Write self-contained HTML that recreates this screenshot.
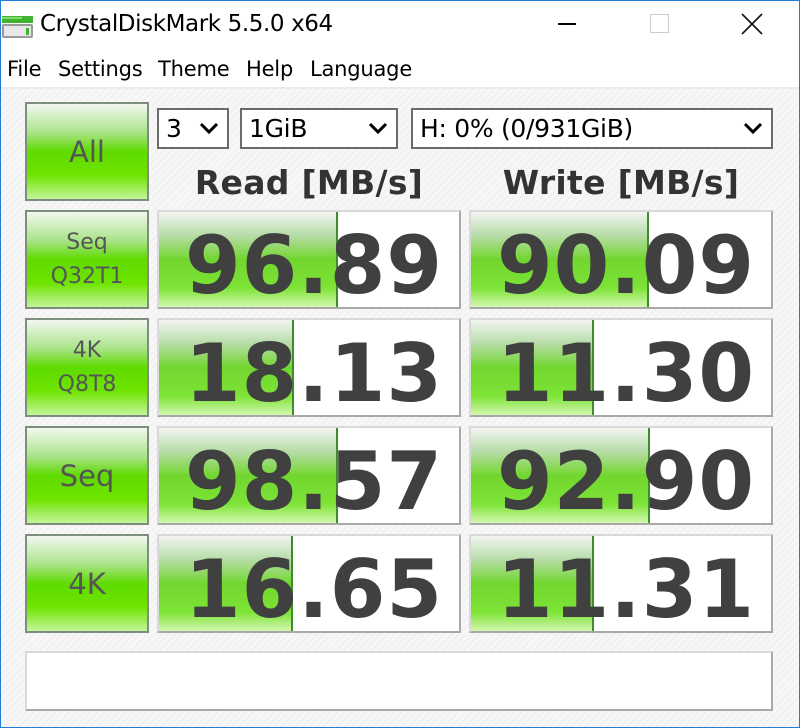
<!DOCTYPE html>
<html><head><meta charset="utf-8"><style>
*{margin:0;padding:0;box-sizing:border-box}
body{width:800px;height:728px;overflow:hidden;background:#fff;font-family:"Liberation Sans","DejaVu Sans",sans-serif;position:relative}
.win{position:absolute;left:0;top:0;width:800px;height:728px;border:1px solid #1f80d8}
.abs{position:absolute}
.title{left:40px;top:11px;font-size:23px;color:#000;font-family:"DejaVu Sans",sans-serif;letter-spacing:-0.4px}
.menu{top:57px;font-size:21px;color:#000;font-family:"DejaVu Sans",sans-serif;letter-spacing:-0.2px}
.body{left:1px;top:87px;width:798px;height:640px;background:repeating-linear-gradient(135deg,#f7f7f7 0 3px,#f1f1f1 3px 5px);border-top:2px solid #ececec}
.btn{left:25px;width:124px;height:99px;border:2px solid #7d8e7d;background:linear-gradient(#f2f8f0 0%,#a9e388 30%,#5fdb00 50%,#6ee400 75%,#c4f59c 100%);color:#555;font-family:"Comic Sans MS","DejaVu Sans",sans-serif;font-size:22px;text-align:center;display:flex;align-items:center;justify-content:center;line-height:34px}
.cell{height:99px;width:304px;border:2px solid;border-color:#d9d9d9 #a8a8a8 #a8a8a8 #d9d9d9;background:#fff;overflow:hidden}
.bar{position:absolute;left:0;top:0;bottom:0;background:linear-gradient(#f3f5f3 0%,#b6dca6 25%,#72d62f 50%,#7de336 80%,#d3f7b0 100%);border-right:2px solid #3f8c2f}
.num{position:absolute;left:10px;right:0;top:9px;text-align:center;font-family:"DejaVu Sans",sans-serif;font-weight:bold;font-size:80px;color:#404040;letter-spacing:1px;line-height:90px}
.combo{top:108px;height:41px;border:2px solid #6b6b6b;background:#fff;font-family:"DejaVu Sans",sans-serif;font-size:25px;line-height:37px;padding-left:7px;color:#000;letter-spacing:-0.3px}
.chev{position:absolute;right:8px;top:8px}
.hdr{top:163px;font-family:"DejaVu Sans",sans-serif;font-weight:bold;font-size:33px;color:#333;text-align:center;width:304px;letter-spacing:0.3px}
</style></head><body>
<div class="win"></div>
<svg class="abs" style="left:2px;top:16px" width="32" height="24"><rect x="0" y="0" width="31" height="7" fill="#3fb52e"/><rect x="0" y="1" width="20" height="2" fill="#7fdc6c"/><rect x="0" y="8" width="31" height="14" rx="2" fill="#9a9a9a"/><rect x="2" y="10" width="27" height="10" fill="#e8e8e8"/><rect x="24" y="12" width="3" height="7" fill="#3fb52e"/></svg>
<div class="abs title">CrystalDiskMark 5.5.0 x64</div>
<div class="abs" style="left:558px;top:23px;width:18px;height:2px;background:#000"></div>
<div class="abs" style="left:650px;top:14px;width:19px;height:19px;border:1px solid #ccc"></div>
<svg class="abs" style="left:741px;top:13px" width="22" height="22"><path d="M1 1L21 21M21 1L1 21" stroke="#111" stroke-width="1.6"/></svg>
<div class="abs menu" style="left:7px">File</div>
<div class="abs menu" style="left:58px">Settings</div>
<div class="abs menu" style="left:158px">Theme</div>
<div class="abs menu" style="left:246px">Help</div>
<div class="abs menu" style="left:310px">Language</div>
<div class="abs body"></div>

<div class="abs btn" style="top:102px;font-size:29px">All</div>
<div class="abs combo" style="left:157px;width:72px">3<svg class="chev" width="20" height="20"><path d="M2 6L10 14L18 6" fill="none" stroke="#000" stroke-width="3"/></svg></div>
<div class="abs combo" style="left:240px;width:158px">1GiB<svg class="chev" width="20" height="20"><path d="M2 6L10 14L18 6" fill="none" stroke="#000" stroke-width="3"/></svg></div>
<div class="abs combo" style="left:411px;width:362px">H: 0% (0/931GiB)<svg class="chev" width="20" height="20"><path d="M2 6L10 14L18 6" fill="none" stroke="#000" stroke-width="3"/></svg></div>
<div class="abs hdr" style="left:157px">Read [MB/s]</div>
<div class="abs hdr" style="left:469px">Write [MB/s]</div>

<div class="abs btn" style="top:210px">Seq<br>Q32T1</div>
<div class="abs btn" style="top:318px">4K<br>Q8T8</div>
<div class="abs btn" style="top:426px;font-size:29px">Seq</div>
<div class="abs btn" style="top:534px;font-size:29px">4K</div>

<div class="abs cell" style="left:157px;top:210px"><div class="bar" style="width:179px"></div><div class="num">96.89</div></div>
<div class="abs cell" style="left:157px;top:318px"><div class="bar" style="width:135px"></div><div class="num">18.13</div></div>
<div class="abs cell" style="left:157px;top:426px"><div class="bar" style="width:179px"></div><div class="num">98.57</div></div>
<div class="abs cell" style="left:157px;top:534px"><div class="bar" style="width:134px"></div><div class="num">16.65</div></div>
<div class="abs cell" style="left:469px;top:210px"><div class="bar" style="width:178px"></div><div class="num">90.09</div></div>
<div class="abs cell" style="left:469px;top:318px"><div class="bar" style="width:123px"></div><div class="num">11.30</div></div>
<div class="abs cell" style="left:469px;top:426px"><div class="bar" style="width:179px"></div><div class="num">92.90</div></div>
<div class="abs cell" style="left:469px;top:534px"><div class="bar" style="width:123px"></div><div class="num">11.31</div></div>

<div class="abs" style="left:25px;top:651px;width:748px;height:60px;border:2px solid;border-color:#d9d9d9 #a8a8a8 #a8a8a8 #d9d9d9;background:#fff"></div>
</body></html>
